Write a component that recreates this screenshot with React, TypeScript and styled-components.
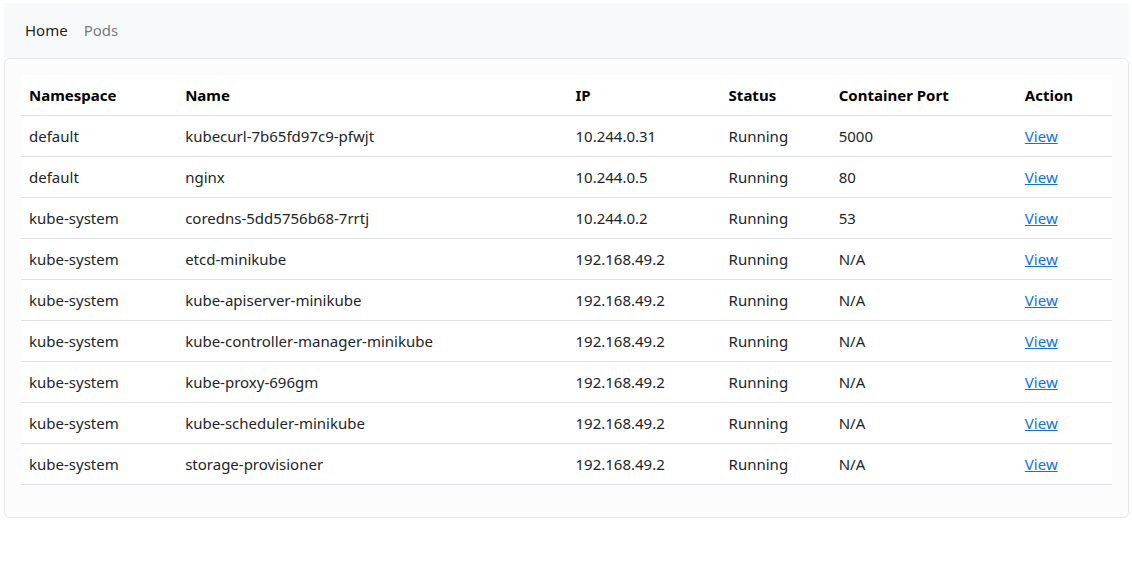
import React from "react";
import styled, { createGlobalStyle } from "styled-components";

const Global = createGlobalStyle`
  html, body { margin: 0; padding: 0; background: #fff; }
  body {
    font-family: "Noto Sans", "Open Sans", sans-serif;
    font-size: 16px;
    line-height: 1.5;
    color: #212529;
  }
  * { box-sizing: border-box; }
`;

const Page = styled.div`
  padding: 3px 3px 0 4px;
`;

const Navbar = styled.nav`
  background: #f8f9fa;
  display: flex;
  align-items: center;
  height: 55px;
  padding: 0 13px;
`;

const NavLink = styled.a<{ $active?: boolean }>`
  padding: 8px;
  color: ${(p) => (p.$active ? "rgba(0,0,0,0.9)" : "rgba(0,0,0,0.55)")};
  text-decoration: none;
  font-size: 15px;
`;

const Card = styled.div`
  border: 1px solid #e6e7e9;
  border-radius: 6px;
  background: #fcfcfc;
  padding: 16px;
`;

const Table = styled.table`
  width: 100%;
  border-collapse: collapse;
  background: #fff;
  margin-bottom: 16px;
  font-size: 15px;
`;

const Th = styled.th<{ $w: number }>`
  width: ${(p) => p.$w}px;
  text-align: left;
  font-weight: 700;
  color: #000;
  padding: 8px;
  height: 40px;
  border-bottom: 1px solid #dee2e6;
`;

const Td = styled.td`
  padding: 9px 8px 7px;
  height: 41px;
  color: #212529;
  border-bottom: 1px solid #dee2e6;
  white-space: nowrap;
`;

const Link = styled.a`
  color: #0d6efd;
  text-decoration: underline;
`;

const cols: [string, number][] = [
  ["Namespace", 156],
  ["Name", 390],
  ["IP", 153],
  ["Status", 110],
  ["Container Port", 186],
  ["Action", 95],
];

const rows = [
  ["default", "kubecurl-7b65fd97c9-pfwjt", "10.244.0.31", "Running", "5000"],
  ["default", "nginx", "10.244.0.5", "Running", "80"],
  ["kube-system", "coredns-5dd5756b68-7rrtj", "10.244.0.2", "Running", "53"],
  ["kube-system", "etcd-minikube", "192.168.49.2", "Running", "N/A"],
  ["kube-system", "kube-apiserver-minikube", "192.168.49.2", "Running", "N/A"],
  ["kube-system", "kube-controller-manager-minikube", "192.168.49.2", "Running", "N/A"],
  ["kube-system", "kube-proxy-696gm", "192.168.49.2", "Running", "N/A"],
  ["kube-system", "kube-scheduler-minikube", "192.168.49.2", "Running", "N/A"],
  ["kube-system", "storage-provisioner", "192.168.49.2", "Running", "N/A"],
];

export default function App() {
  return (
    <Page>
      <Global />
      <Navbar>
        <NavLink $active href="#">Home</NavLink>
        <NavLink href="#">Pods</NavLink>
      </Navbar>
      <Card>
        <Table>
          <thead>
            <tr>
              {cols.map(([c, w]) => (
                <Th key={c} $w={w}>{c}</Th>
              ))}
            </tr>
          </thead>
          <tbody>
            {rows.map((r) => (
              <tr key={r[1]}>
                {r.map((v, i) => (
                  <Td key={i}>{v}</Td>
                ))}
                <Td>
                  <Link href="#">View</Link>
                </Td>
              </tr>
            ))}
          </tbody>
        </Table>
      </Card>
    </Page>
  );
}
